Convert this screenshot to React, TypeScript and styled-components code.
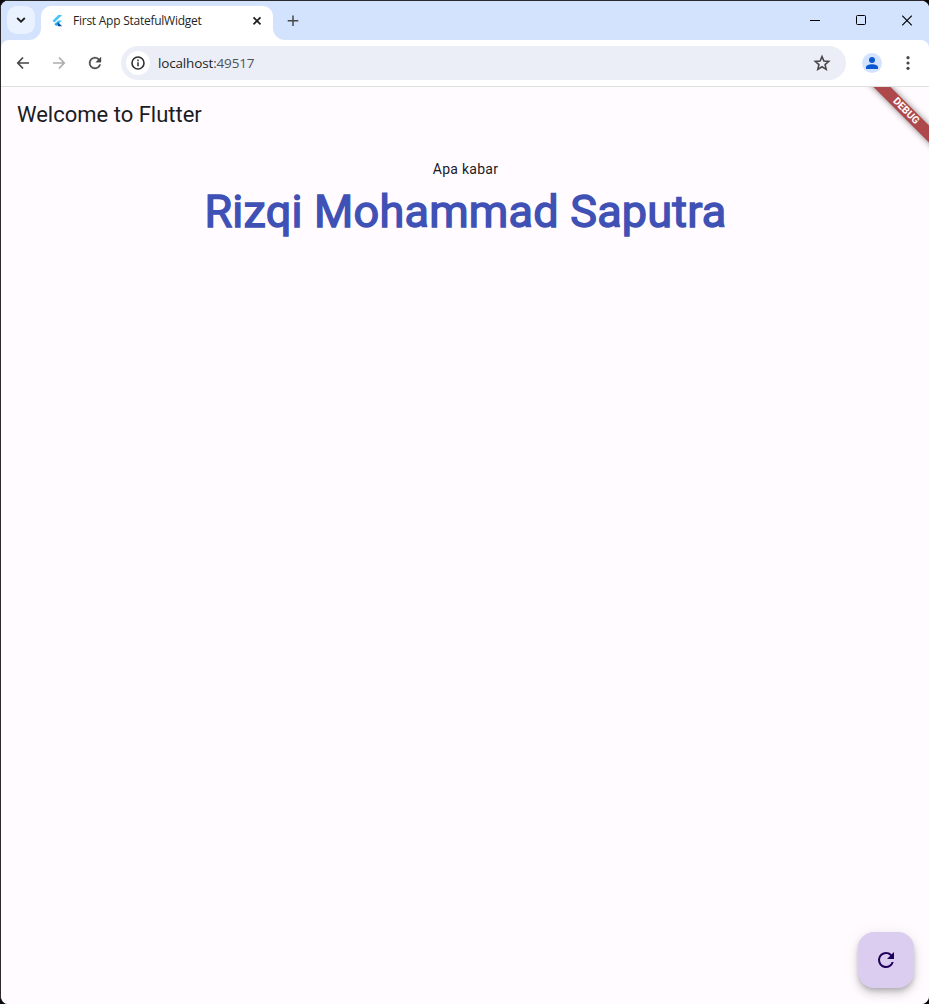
import React from 'react';
import styled, { createGlobalStyle } from 'styled-components';

const GlobalStyle = createGlobalStyle`
  * { box-sizing: border-box; }
  html, body { margin: 0; padding: 0; background: #0a0a0a; }
  body { overflow: hidden; }
`;

const frame = '#d3e3fd';

const Window = styled.div`
  width: 929px;
  height: 1004px;
  display: flex;
  flex-direction: column;
  border-top: 1px solid #2b2b2e;
  border-left: 1px solid #2b2b2e;
  border-radius: 8px;
  overflow: hidden;
  position: relative;
  background: ${frame};
`;

const TitleBar = styled.header`
  display: flex;
  height: 39px;
  flex: none;
  background: #fff;
`;

const SearchStrip = styled.div`
  width: 40px;
  background: ${frame};
  border-bottom-right-radius: 12px;
  padding: 5px 0 0 6px;
`;

const TabSearch = styled.button`
  width: 28px;
  height: 28px;
  border: 0;
  border-radius: 10px;
  background: #ebf2ff;
  padding: 0;
  display: grid;
  place-items: center;
`;

const TabSlot = styled.div`
  width: 232px;
  padding-top: 5px;
  background: linear-gradient(${frame} 20px, #fff 20px);
`;

const Tab = styled.div`
  height: 34px;
  background: #fff;
  border-radius: 10px 10px 0 0;
  display: flex;
  align-items: center;
  padding: 0 8px 5px 8px;
`;

const TabTitle = styled.span`
  font: 12px/16px 'Open Sans', sans-serif;
  letter-spacing: -0.25px;
  color: #1f1f1f;
  margin-left: 8px;
  flex: 1;
  white-space: nowrap;
`;

const Icon = styled.svg`
  display: block;
  flex: none;
`;

const FrameStrip = styled.div`
  flex: 1;
  background: ${frame};
  border-bottom-left-radius: 12px;
  display: flex;
  align-items: center;
  padding-left: 12px;
`;

const WindowControls = styled.div`
  display: flex;
  margin-left: auto;
  margin-right: -1px;
`;

const Control = styled.button`
  width: 46px;
  height: 39px;
  border: 0;
  padding: 0;
  background: none;
  display: grid;
  place-items: center;
`;

const Toolbar = styled.div`
  height: 47px;
  flex: none;
  background: #fff;
  border-bottom: 1px solid #dfe0e1;
  border-radius: 8px 8px 0 0;
  display: flex;
  align-items: center;
  padding: 0 19px 0 12px;
`;

const NavButton = styled.button`
  width: 20px;
  height: 20px;
  border: 0;
  padding: 0;
  background: none;
  display: grid;
  place-items: center;
  margin-right: 16px;
`;

const Omnibox = styled.div`
  flex: 1;
  height: 34px;
  border-radius: 17px;
  background: #ebeef7;
  display: flex;
  align-items: center;
  padding: 0 15px 0 5px;
`;

const SiteInfo = styled.div`
  width: 24px;
  height: 24px;
  border-radius: 50%;
  background: #fff;
  display: grid;
  place-items: center;
`;

const Address = styled.span`
  flex: 1;
  margin-left: 8px;
  font: 13.5px/20px 'Open Sans', sans-serif;
  letter-spacing: -0.16px;
  color: #1f1f1f;
`;

const Port = styled.span`
  color: #4f5256;
`;

const Avatar = styled.div`
  width: 20px;
  height: 20px;
  border-radius: 50%;
  background: ${frame};
  display: grid;
  place-items: center;
  margin: 0 24px 0 16px;
`;

const Page = styled.main`
  flex: 1;
  position: relative;
  overflow: hidden;
  background: #fffbff;
  font-family: Roboto, sans-serif;
  color: #1c1b1f;
`;

const AppBar = styled.h1`
  margin: 0;
  height: 56px;
  padding: 0 16px;
  font-size: 22px;
  font-weight: 400;
  line-height: 56px;
`;

const Body = styled.section`
  display: flex;
  flex-direction: column;
  align-items: center;
  padding: 16px 0 0 1px;
`;

const Greeting = styled.p`
  margin: 0;
  font-size: 14px;
  line-height: 20px;
  letter-spacing: 0.25px;
`;

const Name = styled.p`
  margin: 7px 0 0;
  font-size: 45px;
  line-height: 52px;
  letter-spacing: 0.22px;
  color: #3f51b5;
  -webkit-text-stroke: 1.4px #3f51b5;
  white-space: nowrap;
`;

const DebugBanner = styled.div`
  position: absolute;
  top: 17.5px;
  right: -33px;
  width: 112px;
  height: 12px;
  transform: rotate(45deg);
  background: #ad484b;
  box-shadow: 0 0 6px rgba(0, 0, 0, 0.5);
  color: #fff;
  font: 700 10.2px/12px Roboto, sans-serif;
  text-align: center;
`;

const Fab = styled.button`
  position: absolute;
  right: 15px;
  bottom: 16px;
  width: 56px;
  height: 56px;
  border: 0;
  border-radius: 16px;
  background: #dbcdf0;
  display: grid;
  place-items: center;
  box-shadow: 0 3px 5px -1px rgba(0, 0, 0, 0.2), 0 6px 10px rgba(0, 0, 0, 0.14), 0 1px 18px rgba(0, 0, 0, 0.06);
`;

const refreshPath =
  'M17.65 6.35A7.96 7.96 0 0 0 12 4a8 8 0 1 0 7.73 10h-2.08A6 6 0 1 1 12 6c1.66 0 3.14.69 4.22 1.78L13 11h7V4z';

export default function App() {
  return (
    <>
      <GlobalStyle />
      <Window>
        <TitleBar>
          <SearchStrip>
            <TabSearch aria-label="Search tabs">
              <Icon width="10" height="8" viewBox="0 0 10 8">
                <path d="M1.2 2l3.8 3.7L8.800 2" fill="none" stroke="#1f1f1f" strokeWidth="1.8" />
              </Icon>
            </TabSearch>
          </SearchStrip>
          <TabSlot>
            <Tab>
              <Icon width="16" height="16" viewBox="0 0 16 16">
                <path d="M9.400 2h3.700L5.400 9.500 3.500 7.800z" fill="#42c5f7" />
                <path d="M9.300 7.500h3.800L9.200 11.100 7.300 9.300z" fill="#42c5f7" />
                <path d="M7.200 11.100l1.900-1.800 4 4H9.400z" fill="#0b4da0" />
                <path d="M5.400 11.200l1.900-1.900 1.900 1.800-1.900 1.900z" fill="#25a9ef" />
              </Icon>
              <TabTitle>First App StatefulWidget</TabTitle>
              <Icon width="16" height="16" viewBox="0 0 16 16">
                <path d="M4.500 4.300l7 7M11.500 4.300l-7 7" stroke="#1f1f1f" strokeWidth="1.7" />
              </Icon>
            </Tab>
          </TabSlot>
          <FrameStrip>
            <Icon width="16" height="16" viewBox="0 0 16 16">
              <path d="M8 2.500v10.500M2.700 7.700h10.600" stroke="#474747" strokeWidth="1.5" />
            </Icon>
            <WindowControls>
              <Control aria-label="Minimize">
                <Icon width="10" height="11" viewBox="0 0 10 11">
                  <path d="M0 5.500h10" stroke="#000" />
                </Icon>
              </Control>
              <Control aria-label="Maximize">
                <Icon width="10" height="11" viewBox="0 0 10 11">
                  <rect x=".5" y=".5" width="9" height="9" rx="1" fill="none" stroke="#000" />
                </Icon>
              </Control>
              <Control aria-label="Close">
                <Icon width="10" height="11" viewBox="0 0 10 11">
                  <path d="M.2.7l9.600 9.600M9.800.7L.2 10.300" stroke="#000" strokeWidth="1.1" />
                </Icon>
              </Control>
            </WindowControls>
          </FrameStrip>
        </TitleBar>
        <Toolbar>
          <NavButton aria-label="Back">
            <Icon width="16" height="16" viewBox="0 0 16 16">
              <path d="M14 8H3M8 2.500L2.800 8 8 13.500" fill="none" stroke="#474747" strokeWidth="1.7" />
            </Icon>
          </NavButton>
          <NavButton aria-label="Forward">
            <Icon width="16" height="16" viewBox="0 0 16 16">
              <path d="M2 8h11M8 2.500L13.200 8 8 13.500" fill="none" stroke="#adadad" strokeWidth="1.7" />
            </Icon>
          </NavButton>
          <NavButton aria-label="Reload">
            <Icon width="18" height="18" viewBox="0 0 24 24">
              <path d={refreshPath} fill="#474747" stroke="#474747" strokeWidth=".4" />
            </Icon>
          </NavButton>
          <Omnibox>
            <SiteInfo>
              <Icon width="16" height="16" viewBox="0 0 16 16">
                <circle cx="8" cy="8" r="6" fill="none" stroke="#2e2e2e" strokeWidth="1.6" />
                <path d="M8 7.300v4M8 4.600v1.600" stroke="#2e2e2e" strokeWidth="1.500" />
              </Icon>
            </SiteInfo>
            <Address>
              localhost<Port>:49517</Port>
            </Address>
            <Icon width="18" height="18" viewBox="0 0 24 24">
              <path
                d="M12 3.300l2.500 6 6.500.6-4.900 4.200 1.500 6.300-5.600-3.400-5.600 3.400 1.500-6.300L3 9.900l6.500-.6z"
                fill="none"
                stroke="#474747"
                strokeWidth="2.100"
              />
            </Icon>
          </Omnibox>
          <Avatar>
            <Icon width="14" height="14" viewBox="0 0 14 14">
              <circle cx="7" cy="4" r="3" fill="#0b57d0" />
              <path d="M1 13v-1.600C1 9.200 4 8.300 7 8.300s6 .9 6 3.100V13z" fill="#0b57d0" />
            </Icon>
          </Avatar>
          <Icon width="4" height="16" viewBox="0 0 4 16">
            <circle cx="2" cy="2.700" r="1.600" fill="#474747" />
            <circle cx="2" cy="8" r="1.600" fill="#474747" />
            <circle cx="2" cy="13.300" r="1.600" fill="#474747" />
          </Icon>
        </Toolbar>
        <Page>
          <AppBar>Welcome to Flutter</AppBar>
          <Body>
            <Greeting>Apa kabar</Greeting>
            <Name>Rizqi Mohammad Saputra</Name>
          </Body>
          <DebugBanner>DEBUG</DebugBanner>
          <Fab aria-label="Refresh">
            <Icon width="24" height="24" viewBox="0 0 24 24">
              <path d={refreshPath} fill="#21005d" />
            </Icon>
          </Fab>
        </Page>
      </Window>
    </>
  );
}
